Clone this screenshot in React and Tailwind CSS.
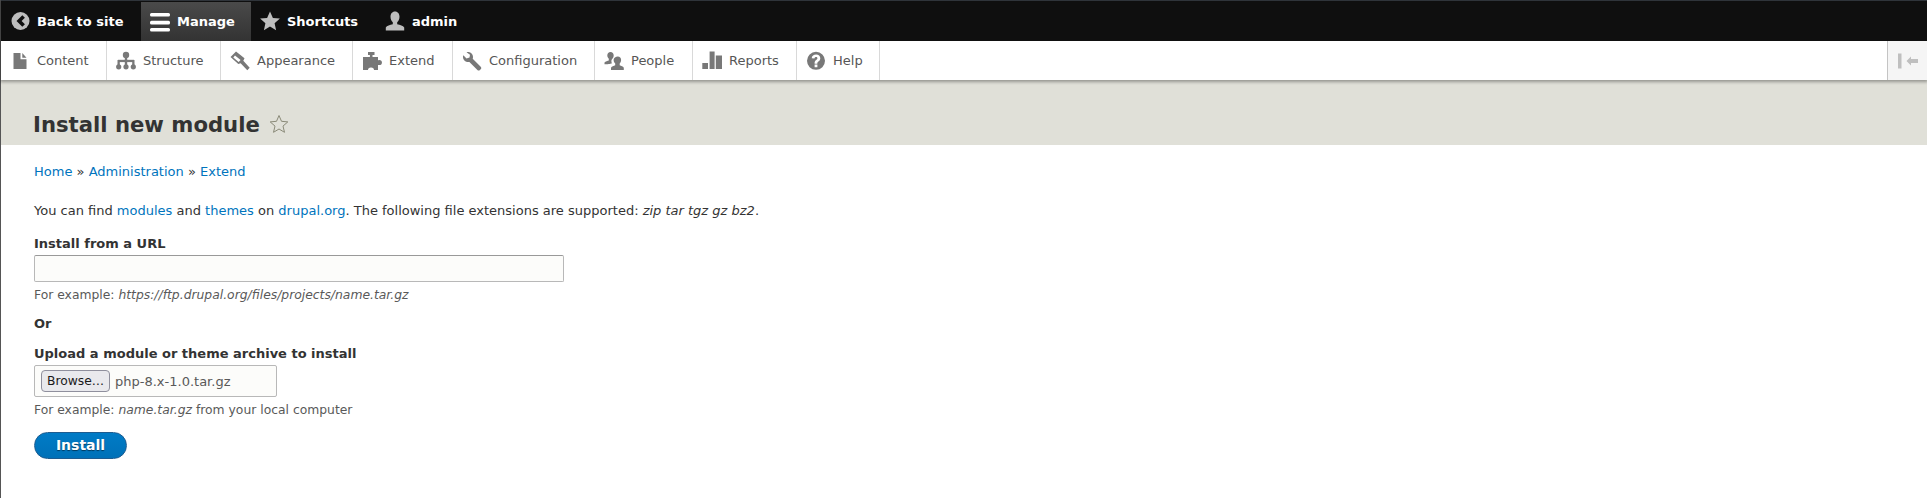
import { useState } from "react";

const Icon = ({ children, className = "" }) => (
  <svg viewBox="0 0 20 20" className={`w-5 h-5 shrink-0 ${className}`} fill="currentColor">
    {children}
  </svg>
);

const icons = {
  back: (
    <>
      <circle cx="10.500" cy="10" r="9" fill="#bdbdbd" />
      <path d="M12.300 4.300l2.600 2.500-3.300 3.200 3.300 3.200-2.600 2.500L6.500 10z" fill="#0f0f0f" />
    </>
  ),
  manage: (
    <>
      <rect x="0" y="1" width="20" height="3.600" rx="1.500" fill="#fff" />
      <rect x="0" y="8.800" width="20" height="3.600" rx="1.500" fill="#fff" />
      <rect x="0" y="16" width="20" height="3.600" rx="1.500" fill="#fff" />
    </>
  ),
  star: <path d="M10 .5l2.900 6.400 7 .7-5.300 4.700 1.500 6.900-6.100-3.600-6.100 3.600 1.500-6.900L.1 7.600l7-.7z" fill="#bebebe" />,
  user: (
    <path
      d="M10 .5c2.900 0 4.500 2.400 4.500 5.300 0 2.400-1 4.500-2.300 5.500v1.900c2.800.7 6 1.500 7 3.300v3H.8v-3c1-1.800 4.200-2.600 7-3.300v-1.900C6.500 10.300 5.500 8.200 5.500 5.800 5.500 2.900 7.100.5 10 .5z"
      fill="#bebebe"
    />
  ),
  content: <path d="M3.500 2h7v6.300h6V18h-13zM12.300 2l4.200 4.700h-4.200z" />,
  structure: (
    <>
      <circle cx="10" cy="4" r="3.200" />
      <rect x="8.800" y="5" width="2.400" height="10" />
      <rect x="2" y="8.800" width="16" height="2.300" />
      <rect x="1.500" y="9" width="2.300" height="6" />
      <rect x="16.200" y="9" width="2.300" height="6" />
      <circle cx="2.700" cy="15.800" r="2.600" />
      <circle cx="10" cy="15.800" r="2.600" />
      <circle cx="17.300" cy="15.800" r="2.600" />
    </>
  ),
  appearance: (
    <path
      fillRule="evenodd"
      d="M6 .5l8.500 6.800-1.200 2.400 6.400 7-2.400 2.500-6.700-7-2.300.9L.5 6zM5 4.600L3.300 6.400l5.300 4.700 2-2.100z"
    />
  ),
  extend: (
    <>
      <rect x="6" y="1" width="6.500" height="3" />
      <rect x="7.900" y="3" width="2.600" height="4" />
      <rect x="1" y="6" width="15" height="13" />
      <circle cx="17.300" cy="11.500" r="2.600" />
      <circle cx="9" cy="19.500" r="3.100" fill="#fff" />
    </>
  ),
  config: (
    <path d="M6 1c2.800 0 5 2.200 5 5 0 .7-.1 1.200-.3 1.700l8 8c.8.900.8 1.900 0 2.500l-.8.800c-.7.7-1.700.7-2.500 0l-8-8C6.900 10.900 6.500 11 6 11c-2.800 0-5-2.200-5-5 0-.600.1-1.100.3-1.700L4.500 7.500l3-1L8 3.800 4.500 1.200C5 1.100 5.500 1 6 1z" />
  ),
  people: (
    <path d="M6.500 1c1.900 0 3.200 1.500 3.200 3.500 0 .9-.2 1.700-.7 2.400-1 .7-1.600 2-1.600 3.300 0 .8.200 1.500.5 2-.9.500-2.400 1-7.400 1v-1.700c1-1.100 3.200-1.500 4.300-2V7.800C4 7 3.300 5.700 3.300 4.500 3.300 2.500 4.600 1 6.500 1zM13.800 5.500c2 0 3.300 1.500 3.300 3.500 0 1.400-.6 2.700-1.400 3.500v1.800c1.500.6 3.300 1.100 4.100 2.400V19H7v-2.300c.8-1.300 2.700-1.800 4.200-2.400v-1.800c-.9-.8-1.600-2.100-1.600-3.500 0-2 2.200-3.500 4.200-3.500z" />
  ),
  reports: (
    <>
      <rect x="0.300" y="12" width="5.700" height="6" />
      <rect x="7.600" y="0.500" width="5" height="17.500" />
      <rect x="13.800" y="4.500" width="6.200" height="13.500" />
    </>
  ),
  help: (
    <path
      fillRule="evenodd"
      d="M10 .8a9 9 0 1 1 0 18 9 9 0 0 1 0-18zM8.600 13.600v2.700h2.800v-2.700zM10.100 3.600C7.700 3.600 6 5 5.700 7.200l2.700.4c.2-1 .8-1.500 1.600-1.500.9 0 1.400.5 1.400 1.200 0 .7-.5 1.100-1.200 1.700-1 .8-1.600 1.700-1.600 3.100v.6h2.700v-.3c0-.8.4-1.200 1.100-1.800 1-.8 1.900-1.700 1.900-3.300 0-2.300-1.700-3.700-4.200-3.700z"
    />
  ),
};

const topItems = [
  { label: "Back to site", icon: "back", w: "w-[140px]" },
  { label: "Manage", icon: "manage", w: "w-[110px]", active: true },
  { label: "Shortcuts", icon: "star", w: "w-[125px]" },
  { label: "admin", icon: "user", w: "w-[95px]" },
];

const trayItems = [
  { label: "Content", icon: "content", w: "w-[106px]" },
  { label: "Structure", icon: "structure", w: "w-[114px]" },
  { label: "Appearance", icon: "appearance", w: "w-[132px]" },
  { label: "Extend", icon: "extend", w: "w-[100px]" },
  { label: "Configuration", icon: "config", w: "w-[142px]" },
  { label: "People", icon: "people", w: "w-[98px]" },
  { label: "Reports", icon: "reports", w: "w-[104px]" },
  { label: "Help", icon: "help", w: "w-[83px]" },
];

function Toolbar() {
  return (
    <div className="relative z-10 shadow-[0_1px_3px_1px_rgba(0,0,0,0.33)]">
      <div className="flex h-[41px] bg-[#0f0f0f] border-t-[1px] border-[#2f343a] text-white font-bold">
        {topItems.map((item) => (
          <a
            key={item.label}
            className={`flex items-center gap-[7px] pl-[9px] ${item.w} ${
              item.active ? "bg-gradient-to-b from-[#4a4a4a] to-[#333333] mt-[1px]" : ""
            }`}
          >
            <Icon>{icons[item.icon]}</Icon>
            <span>{item.label}</span>
          </a>
        ))}
      </div>
      <div className="flex h-[39px] bg-white text-[#565656]">
        {trayItems.map((item) => (
          <a key={item.label} className={`flex items-center gap-[7px] pl-[9px] border-r border-[#d9d9d9] ${item.w}`}>
            <Icon className="text-[#787878]">{icons[item.icon]}</Icon>
            <span>{item.label}</span>
          </a>
        ))}
        <button className="ml-auto w-[40px] flex items-center justify-center bg-[#f5f5f5] border-l border-[#c4c4c4]">
          <svg viewBox="0 0 20 16" className="w-[20px] h-[16px]" fill="#bfbfbf">
            <rect x="0" y="0.500" width="3.500" height="15" />
            <path d="M8.500 8L13 3.500v2.500h7v4h-7v2.500z" />
          </svg>
        </button>
      </div>
    </div>
  );
}

export default function App() {
  const [url, setUrl] = useState("");

  return (
    <div className="font-['DejaVu_Sans',sans-serif] text-[13px] leading-[19px] text-[#333] min-h-[498px] bg-white border-l border-[#555]">
      <Toolbar />

      <div className="bg-[#e0e0d8] h-[65px] pl-[32px] pt-[31px] flex items-start gap-[9px]">
        <h1 className="text-[21.200px] leading-[28px] font-bold text-[#333]">Install new module</h1>
        <svg viewBox="0 0 20 20" className="w-[20px] h-[20px] mt-[3px]" fill="none" stroke="#8a8a78" strokeWidth="1">
          <path d="M10 1.500l2.500 5.800 6.300.6-4.800 4.200 1.500 6.200L10 15l-5.500 3.300L6 12.100 1.200 7.900l6.300-.6z" />
        </svg>
      </div>

      <div className="pl-[33px] pt-[17px]">
        <nav className="text-[#0074bd]">
          <a>Home</a> <span className="text-[#333]">»</span> <a>Administration</a> <span className="text-[#333]">»</span>{" "}
          <a>Extend</a>
        </nav>

        <p className="mt-[20px]">
          You can find <a className="text-[#0074bd]">modules</a> and <a className="text-[#0074bd]">themes</a> on{" "}
          <a className="text-[#0074bd]">drupal.org</a>. The following file extensions are supported:{" "}
          <em>zip tar tgz gz bz2</em>.
        </p>

        <label className="block mt-[14px] font-bold">Install from a URL</label>
        <input
          value={url}
          onChange={(e) => setUrl(e.target.value)}
          className="block mt-[2px] w-[530px] h-[27px] bg-[#fcfcfa] border border-[#b8b8b8] border-t-[#999] rounded-[2px]"
        />
        <p className="mt-[4px] text-[12.350px] leading-[18px] text-[#595959]">
          For example: <em>https://ftp.drupal.org/files/projects/name.tar.gz</em>
        </p>

        <p className="mt-[10px] font-bold">Or</p>

        <label className="block mt-[11px] font-bold">Upload a module or theme archive to install</label>
        <div className="mt-[2px] flex items-center w-[243px] h-[32px] bg-[#fcfcfa] border border-[#b8b8b8] rounded-[2px] pl-[6px]">
          <button className="h-[22px] w-[69px] bg-[#e9e9ed] border border-[#8f8f9d] rounded-[4px] text-[12.300px] text-[#1a1a1a]">
            Browse…
          </button>
          <span className="ml-[5px] text-[#595959]">php-8.x-1.0.tar.gz</span>
        </div>
        <p className="mt-[4px] text-[12.350px] leading-[18px] text-[#595959]">
          For example: <em>name.tar.gz</em> from your local computer
        </p>

        <button className="mt-[13px] block w-[93px] h-[27px] rounded-full bg-gradient-to-b from-[#007bc6] to-[#0071b8] border border-[#1e5c90] text-white font-bold text-[14px] [text-shadow:0_1px_1px_rgba(0,0,0,0.5)]">
          Install
        </button>
      </div>
    </div>
  );
}
